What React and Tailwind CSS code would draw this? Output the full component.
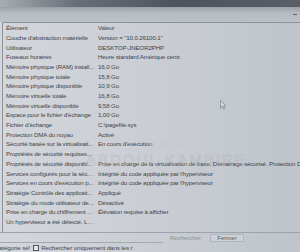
import React from "react";

const rows = [
  ["Élément", "Valeur"],
  ["Couche d'abstraction matérielle", "Version = \"10.0.26100.1\""],
  ["Utilisateur", "DESKTOP-JNEOR2PHP"],
  ["Fuseaux horaires", "Heure standard Amérique centr."],
  ["Mémoire physique (RAM) install...", "16,0 Go"],
  ["Mémoire physique totale", "15,8 Go"],
  ["Mémoire physique disponible", "10,9 Go"],
  ["Mémoire virtuelle totale", "16,8 Go"],
  ["Mémoire virtuelle disponible", "9,58 Go"],
  ["Espace pour le fichier d'échange", "1,00 Go"],
  ["Fichier d'échange", "C:\\pagefile.sys"],
  ["Protection DMA du noyau", "Activé"],
  ["Sécurité basée sur la virtualisati...", "En cours d'exécution"],
  ["Propriétés de sécurité requises ...", ""],
  ["Propriétés de sécurité disponibl...", "Prise en charge de la virtualisation de base, Démarrage sécurisé, Protection DMA"],
  ["Services configurés pour la sécu...", "Intégrité du code appliquée par l'hyperviseur"],
  ["Services en cours d'exécution p...", "Intégrité du code appliquée par l'hyperviseur"],
  ["Stratégie Contrôle des applicati...", "Appliqué"],
  ["Stratégie du mode utilisateur de...", "Désactivé"],
  ["Prise en charge du chiffrement a...", "Élévation requise à afficher"],
  ["Un hyperviseur a été détecté. Le...", ""],
];

export default function App() {
  return (
    <div
      className="relative w-[300px] h-[252px] overflow-hidden bg-[linear-gradient(90deg,#d3d6db_0%,#cbcfd5_45%,#bfc4cb_100%)] text-[#40444c]"
      style={{ fontFamily: '"Liberation Sans", Arial, sans-serif' }}
    >
      <div className="h-[7px] bg-[linear-gradient(90deg,#a8adb4_0%,#6a6f77_25%,#4e535b_60%,#5a5f67_100%)]" />
      <div className="h-[15px] bg-[linear-gradient(180deg,#9aa0a8_0%,#b7bcc3_40%,#bcc1c8_100%)] flex justify-end items-center pr-[3px]">
        <div className="w-[4px] h-[1px] bg-[#5f646c]" />
      </div>
      <div className="border-t border-[#8d939b] h-[210px] border-l ml-[2px] pt-[0.5px]">
        {rows.map(([a, b], i) => (
          <div key={i} className="flex h-[9.7px] items-center text-[6.2px] tracking-[-0.15px] leading-none">
            <div className="w-[92px] shrink-0 pl-[3px] whitespace-nowrap overflow-hidden text-ellipsis">{a.replace(/\.\.\.$/, "").trimEnd() + (a.endsWith("...") ? "..." : "")}</div>
            <div className="ml-[3px] whitespace-nowrap">{b}</div>
          </div>
        ))}
      </div>
      <div className="border-t border-[#9ea3ab] flex items-center h-[11px] text-[6px]">
        <div className="w-[163px] h-[9px] border-b border-[#a4a9b0]" />
        <div className="ml-[7px] text-[#8b9098]">Rechercher</div>
        <div className="ml-[9px] w-[34px] h-[8px] border border-[#b1b6bd] bg-[#cdd1d6] flex items-center justify-center text-[#555a62]">Fermer</div>
      </div>
      <div className="flex items-center h-[10px] text-[6.2px] tracking-[-0.1px] -ml-[1px]">
        <span>atégorie sé!</span>
        <span className="ml-[3px] w-[6px] h-[6px] border border-[#50555d] bg-[#e4e6e9]" />
        <span className="ml-[2px] whitespace-nowrap">Rechercher uniquement dans les r</span>
      </div>

      {/* watermark */}
      <div className="absolute left-[150px] top-[139px] text-[8px] text-[#c3c7cd] tracking-[0.5px]">SUR JIJI</div>
      <div className="absolute left-[86px] top-[149px] text-[15px] text-transparent tracking-[2px] [-webkit-text-stroke:0.4px_#aeb3ba] opacity-80 whitespace-nowrap">ABDOUL KAMBIRE</div>

      {/* cursor */}
      <svg className="absolute left-[220px] top-[100px]" width="7" height="10" viewBox="0 0 7 10">
        <path d="M0.5 0.5 L0.5 8 L2.3 6.3 L3.6 9.2 L4.8 8.7 L3.5 5.9 L6 5.9 Z" fill="#d8dbe0" stroke="#6b7078" strokeWidth="0.6" />
      </svg>
    </div>
  );
}
